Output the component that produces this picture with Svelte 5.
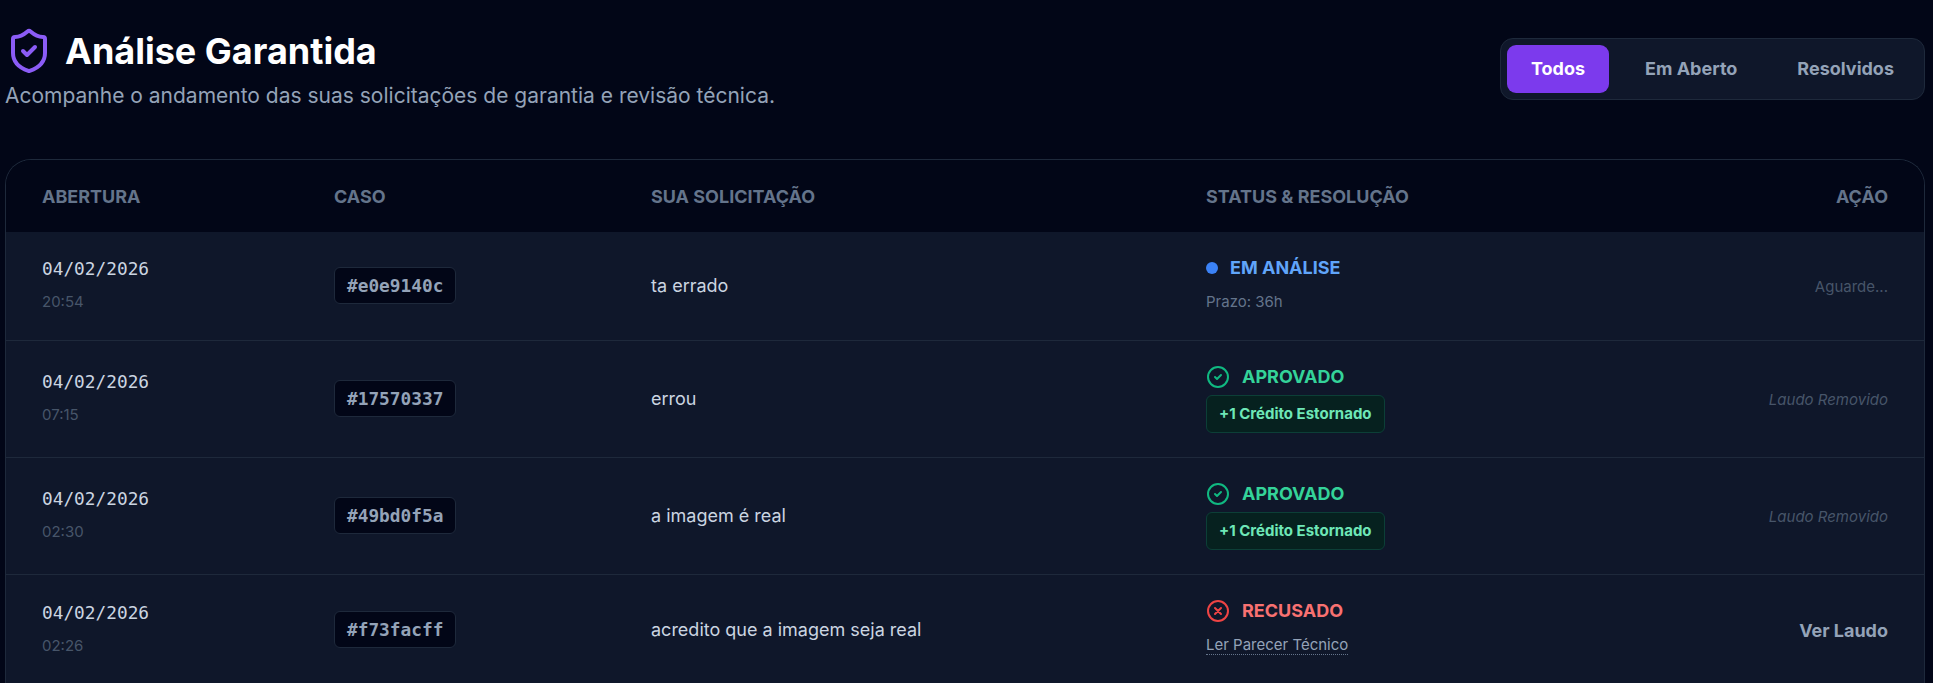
<script>
	const rows = [
		{ date: '04/02/2026', time: '20:54', id: '#e0e9140c', text: 'ta errado', status: 'pending', action: 'Aguarde...', actionKind: 'wait' },
		{ date: '04/02/2026', time: '07:15', id: '#17570337', text: 'errou', status: 'approved', action: 'Laudo Removido', actionKind: 'removed' },
		{ date: '04/02/2026', time: '02:30', id: '#49bd0f5a', text: 'a imagem é real', status: 'approved', action: 'Laudo Removido', actionKind: 'removed' },
		{ date: '04/02/2026', time: '02:26', id: '#f73facff', text: 'acredito que a imagem seja real', status: 'rejected', action: 'Ver Laudo', actionKind: 'link' }
	];
	const tabs = ['Todos', 'Em Aberto', 'Resolvidos'];
</script>

<div class="page">
	<header class="top">
		<div class="heading">
			<div class="title">
				<svg class="shield" viewBox="0 0 24 24" fill="none" stroke="currentColor" stroke-width="2" stroke-linecap="round" stroke-linejoin="round">
					<path d="M20 13c0 5-3.5 7.5-7.66 8.95a1 1 0 0 1-.67-.01C7.5 20.5 4 18 4 13V6a1 1 0 0 1 1-1c2 0 4.5-1.2 6.24-2.72a1.17 1.17 0 0 1 1.52 0C14.51 3.81 17 5 19 5a1 1 0 0 1 1 1z" />
					<path d="m9 12 2 2 4-4" />
				</svg>
				<h1>Análise Garantida</h1>
			</div>
			<p class="sub">Acompanhe o andamento das suas solicitações de garantia e revisão técnica.</p>
		</div>
		<nav class="tabs">
			{#each tabs as tab, i}
				<button class:active={i === 0}>{tab}</button>
			{/each}
		</nav>
	</header>

	<section class="card">
		<table>
			<colgroup>
				<col style="width:292px" />
				<col style="width:317px" />
				<col style="width:555px" />
				<col />
				<col style="width:240px" />
			</colgroup>
			<thead>
				<tr>
					<th>ABERTURA</th>
					<th>CASO</th>
					<th>SUA SOLICITAÇÃO</th>
					<th>STATUS &amp; RESOLUÇÃO</th>
					<th class="right">AÇÃO</th>
				</tr>
			</thead>
			<tbody>
				{#each rows as row}
					<tr class:tall={row.status === 'approved'}>
						<td>
							<div class="date">{row.date}</div>
							<div class="time">{row.time}</div>
						</td>
						<td><div class="case">{row.id}</div></td>
						<td class="text">{row.text}</td>
						<td>
							{#if row.status === 'pending'}
								<div class="status pending"><span class="dot"></span>EM ANÁLISE</div>
								<div class="deadline">Prazo: 36h</div>
							{:else if row.status === 'approved'}
								<div class="status approved">
									<svg viewBox="0 0 24 24" fill="none" stroke="currentColor" stroke-width="2" stroke-linecap="round" stroke-linejoin="round">
										<circle cx="12" cy="12" r="10" />
										<path d="m9 12 2 2 4-4" />
									</svg>
									APROVADO
								</div>
								<div class="credit">+1 Crédito Estornado</div>
							{:else}
								<div class="status rejected">
									<svg viewBox="0 0 24 24" fill="none" stroke="currentColor" stroke-width="2" stroke-linecap="round" stroke-linejoin="round">
										<circle cx="12" cy="12" r="10" />
										<path d="m15 9-6 6M9 9l6 6" />
									</svg>
									RECUSADO
								</div>
								<div class="opinion">Ler Parecer Técnico</div>
							{/if}
						</td>
						<td class="right"><span class={row.actionKind}>{row.action}</span></td>
					</tr>
				{/each}
			</tbody>
		</table>
	</section>
</div>

<style>
	:global(body) {
		background: #020617;
		overflow: hidden;
	}

	.page {
		height: 683px;
		overflow: hidden;
		padding: 0 8px 0 5px;
		font-family: Inter, 'Liberation Sans', sans-serif;
		color: #e2e8f0;
	}

	.top {
		display: flex;
		justify-content: space-between;
		align-items: flex-start;
		height: 159px;
		padding-top: 27px;
		box-sizing: border-box;
	}

	.title {
		display: flex;
		align-items: center;
		gap: 12px;
	}

	.shield {
		width: 48px;
		height: 48px;
		color: #8b5cf6;
	}

	h1 {
		margin: 0;
		font-size: 36px;
		line-height: 48px;
		font-weight: 700;
		color: #fff;
	}

	.sub {
		margin: 7px 0 0;
		font-size: 21px;
		line-height: 28px;
		color: #94a3b8;
	}

	.tabs {
		display: flex;
		gap: 12px;
		padding: 6px;
		margin-top: 11px;
		background: #0f172a;
		border: 1px solid #1e293b;
		border-radius: 13px;
	}

	.tabs button {
		border: 0;
		background: none;
		font: 700 18px/48px Inter, sans-serif;
		color: #94a3b8;
		padding: 0 24px;
		border-radius: 9px;
	}

	.tabs button.active {
		background: #7c3aed;
		color: #fff;
	}

	.card {
		border: 1px solid #1e293b;
		border-bottom: 0;
		border-radius: 26px 26px 0 0;
		overflow: hidden;
	}

	table {
		width: 100%;
		border-collapse: collapse;
		table-layout: fixed;
	}

	th {
		height: 72px;
		padding: 0 0 0 36px;
		text-align: left;
		font-size: 18px;
		font-weight: 700;
		color: #64748b;
		background: #020617;
	}

	td {
		padding: 0 0 0 36px;
		background: #0f172a;
		border-bottom: 1px solid #1e293b;
		height: 108px;
	}

	tr.tall td {
		height: 116px;
	}

	tbody tr:last-child td {
		border-bottom: 0;
		height: 110px;
	}

	th.right,
	td.right {
		text-align: right;
		padding: 0 36px 0 0;
	}

	.date {
		font: 400 17.8px/24px 'DejaVu Sans Mono', monospace;
		color: #cbd5e1;
	}

	.time {
		font-size: 15px;
		line-height: 28px;
		color: #475569;
		margin-top: 7px;
	}

	.case {
		width: fit-content;
		font: 700 17.8px/35px 'DejaVu Sans Mono', monospace;
		color: #94a3b8;
		background: #020617;
		border: 1px solid #1e293b;
		border-radius: 6px;
		padding: 0 12px;
		margin-bottom: 1px;
	}

	td.text {
		box-sizing: border-box;
		font-size: 18px;
		color: #cbd5e1;
		padding-bottom: 2px;
	}

	.status {
		display: flex;
		align-items: center;
		font-size: 18px;
		font-weight: 700;
		line-height: 24px;
	}

	.status svg {
		width: 24px;
		height: 24px;
		margin-right: 12px;
	}

	.dot {
		width: 12px;
		height: 12px;
		border-radius: 50%;
		background: #3b82f6;
		margin-right: 12px;
	}

	.pending {
		color: #60a5fa;
	}

	.approved {
		color: #34d399;
	}

	.approved svg {
		color: #10b981;
	}

	.rejected {
		color: #f87171;
	}

	.rejected svg {
		color: #ef4444;
	}

	.deadline {
		font-size: 15px;
		line-height: 28px;
		color: #64748b;
		margin-top: 8px;
	}

	.credit {
		width: fit-content;
		margin-top: 6px;
		font-size: 15px;
		font-weight: 700;
		line-height: 36px;
		color: #6ee7b7;
		background: #06211f;
		border: 1px solid #0c3f37;
		border-radius: 6px;
		padding: 0 12px;
	}

	.opinion {
		width: fit-content;
		margin: 12px 0 6px;
		font-size: 15px;
		line-height: 19px;
		color: #94a3b8;
		border-bottom: 1px dotted #64748b;
	}

	.wait {
		font-size: 15px;
		color: #475569;
	}

	.removed {
		font-size: 15px;
		font-style: italic;
		color: #475569;
	}

	.link {
		font-size: 18px;
		font-weight: 700;
		color: #94a3b8;
	}
</style>
